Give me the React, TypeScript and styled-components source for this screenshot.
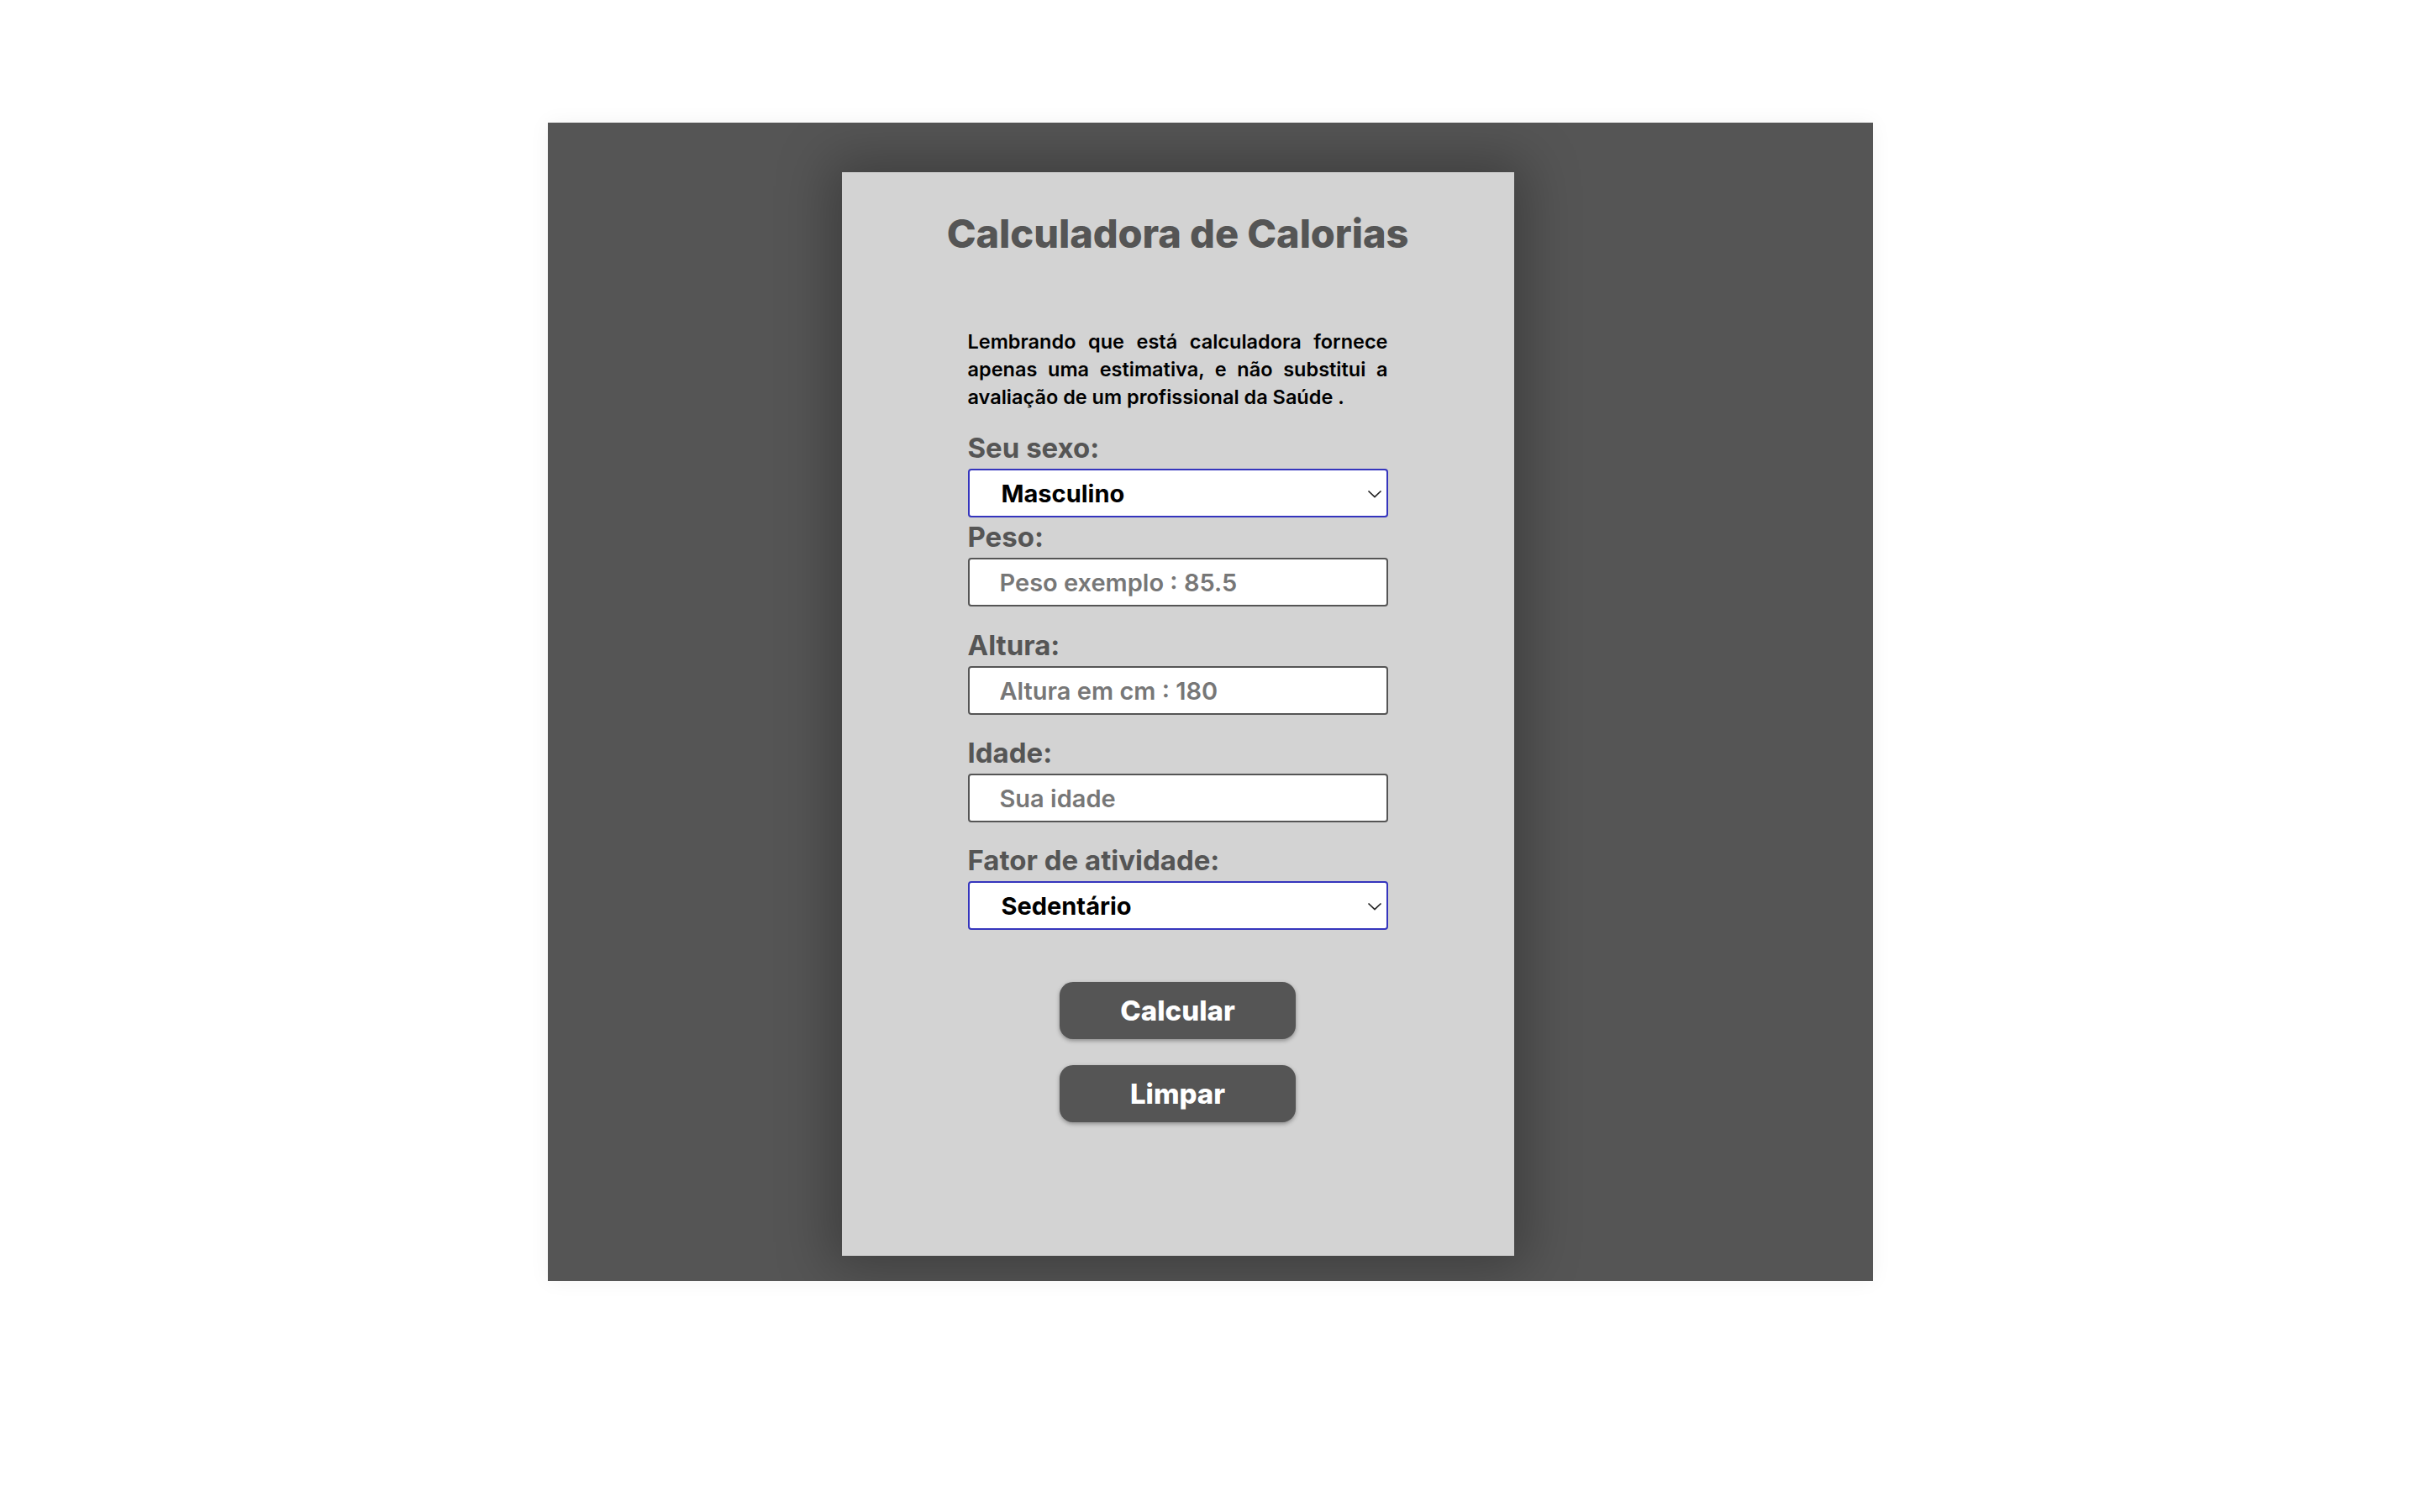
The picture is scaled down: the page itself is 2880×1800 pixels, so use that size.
import React from "react";
import styled, { createGlobalStyle } from "styled-components";

const GlobalStyle = createGlobalStyle`
  html, body {
    margin: 0;
    padding: 0;
    background: #ffffff;
  }
  body {
    font-family: "Inter", "Open Sans", sans-serif;
  }
  * {
    box-sizing: border-box;
  }
`;

const Page = styled.div`
  width: 2880px;
  min-height: 1800px;
  padding-top: 146px;
`;

const Stage = styled.main`
  width: 1577px;
  height: 1379px;
  margin: 0 auto;
  background: #555555;
  padding: 59px 0 0 350px;
  overflow: hidden;
  box-shadow: 0 0 24px rgba(0, 0, 0, 0.05);
`;

const Card = styled.section`
  width: 800px;
  height: 1290px;
  background: #d3d3d3;
  box-shadow: 0 0 60px 14px rgba(0, 0, 0, 0.28);
  display: flex;
  flex-direction: column;
  align-items: center;
  padding-top: 44px;
`;

const Title = styled.h1`
  margin: 0;
  font-family: "Inter", sans-serif;
  font-size: 47px;
  line-height: 58px;
  font-weight: 800;
  color: #555555;
  letter-spacing: -0.1px;
`;

const Notice = styled.p`
  width: 500px;
  margin: 83px 0 0;
  font-family: "Inter", sans-serif;
  font-size: 23.5px;
  line-height: 33px;
  font-weight: 600;
  color: #000000;
  text-align: justify;
`;

const Form = styled.form`
  width: 500px;
  display: flex;
  flex-direction: column;
  margin-top: 26px;
`;

const Field = styled.div<{ $gap: number }>`
  display: flex;
  flex-direction: column;
  gap: 7px;
  margin-top: ${(p) => p.$gap}px;
`;

const Label = styled.label`
  font-family: "Inter", sans-serif;
  font-size: 33px;
  line-height: 36px;
  font-weight: 700;
  color: #555555;
  letter-spacing: 0;
`;

const SelectWrap = styled.div`
  position: relative;
  width: 500px;
  height: 58px;
`;

const Select = styled.select`
  appearance: none;
  -webkit-appearance: none;
  width: 100%;
  height: 100%;
  background: #ffffff;
  border: 2px solid #3535bd;
  border-radius: 4px;
  padding: 0 0 0 38px;
  font-family: "Inter", sans-serif;
  font-size: 29px;
  font-weight: 700;
  color: #000000;
  outline: none;
`;

const Chevron = styled.svg`
  position: absolute;
  right: 7px;
  top: 50%;
  width: 18px;
  height: 10px;
  margin-top: -4px;
  pointer-events: none;
`;

const Input = styled.input`
  width: 500px;
  height: 58px;
  background: #ffffff;
  border: 2px solid #555555;
  border-radius: 4px;
  padding: 0 0 0 36px;
  font-family: "Inter", sans-serif;
  font-size: 29px;
  font-weight: 600;
  color: #000000;
  outline: none;

  &::placeholder {
    color: #777777;
    opacity: 1;
  }
`;

const Actions = styled.div`
  display: flex;
  flex-direction: column;
  align-items: center;
  gap: 31px;
  margin-top: 62px;
`;

const Button = styled.button`
  width: 281px;
  height: 68px;
  background: #555555;
  border: none;
  border-radius: 16px;
  box-shadow: 0 2px 5px rgba(0, 0, 0, 0.35);
  font-family: "Inter", sans-serif;
  font-size: 33px;
  font-weight: 800;
  color: #ffffff;
  cursor: pointer;
`;

const ChevronIcon = () => (
  <Chevron viewBox="0 0 18 10" aria-hidden="true">
    <path d="M1.5 1.5 L9 8.5 L16.5 1.5" fill="none" stroke="#222" strokeWidth="1.7" />
  </Chevron>
);

export default function App() {
  return (
    <>
      <GlobalStyle />
      <Page>
        <Stage>
          <Card>
            <Title>Calculadora de Calorias</Title>
            <Notice>
              Lembrando que está calculadora fornece apenas uma estimativa, e
              não substitui a avaliação de um profissional da Saúde .
            </Notice>
            <Form onSubmit={(e) => e.preventDefault()}>
              <Field $gap={0}>
                <Label htmlFor="sexo">Seu sexo:</Label>
                <SelectWrap>
                  <Select id="sexo" defaultValue="m">
                    <option value="m">Masculino</option>
                    <option value="f">Feminino</option>
                  </Select>
                  <ChevronIcon />
                </SelectWrap>
              </Field>
              <Field $gap={5}>
                <Label htmlFor="peso">Peso:</Label>
                <Input id="peso" placeholder="Peso exemplo : 85.5" />
              </Field>
              <Field $gap={28}>
                <Label htmlFor="altura">Altura:</Label>
                <Input id="altura" placeholder="Altura em cm : 180" />
              </Field>
              <Field $gap={27}>
                <Label htmlFor="idade">Idade:</Label>
                <Input id="idade" placeholder="Sua idade" />
              </Field>
              <Field $gap={27}>
                <Label htmlFor="fator">Fator de atividade:</Label>
                <SelectWrap>
                  <Select id="fator" defaultValue="1.2">
                    <option value="1.2">Sedentário</option>
                    <option value="1.375">Levemente ativo</option>
                    <option value="1.55">Moderadamente ativo</option>
                    <option value="1.725">Muito ativo</option>
                  </Select>
                  <ChevronIcon />
                </SelectWrap>
              </Field>
              <Actions>
                <Button type="button">Calcular</Button>
                <Button type="reset">Limpar</Button>
              </Actions>
            </Form>
          </Card>
        </Stage>
      </Page>
    </>
  );
}
